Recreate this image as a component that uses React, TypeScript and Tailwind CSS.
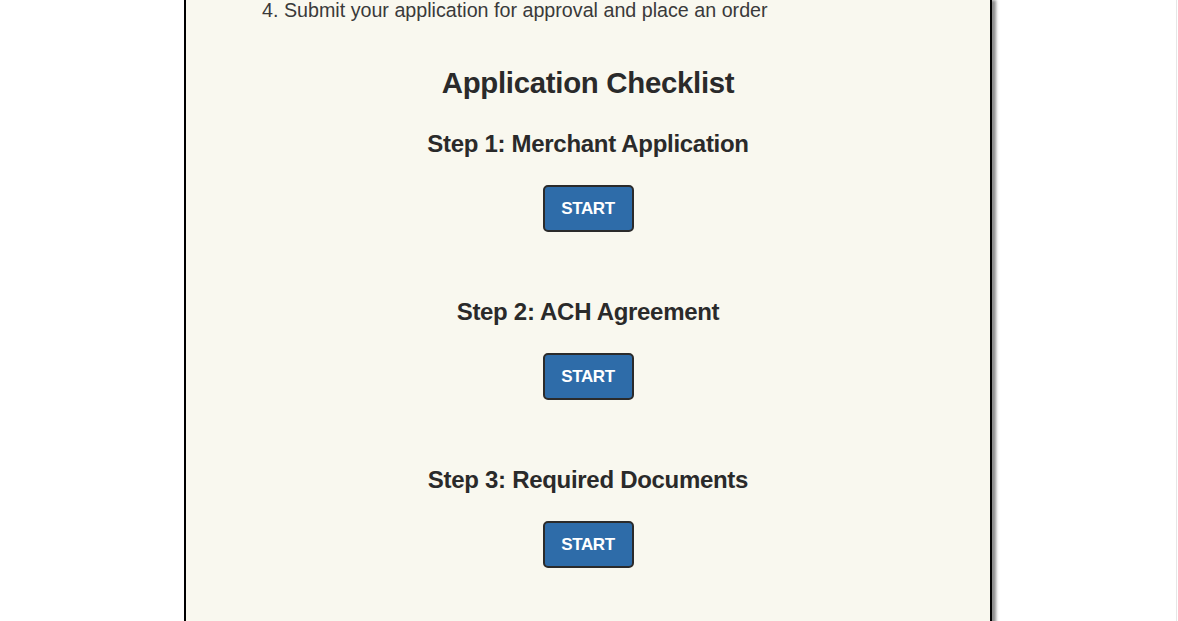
import React from "react";

function Step({ title }: { title: string }) {
  return (
    <div className="flex flex-col items-center">
      <h3 className="text-[24px] leading-[30px] font-bold text-[#2a2a2a] tracking-[-0.3px]">{title}</h3>
      <button className="mt-[26px] w-[91px] h-[47px] rounded-[5px] border-2 border-[#2b2b2b] bg-[#2e6ca9] text-white text-[17px] font-bold tracking-[-0.4px]">
        START
      </button>
    </div>
  );
}

export default function App() {
  return (
    <div className="w-[1178px] h-[621px] overflow-hidden bg-white flex" style={{ fontFamily: '"Liberation Sans", Arial, sans-serif' }}>
      <div className="ml-[184px] w-[808px] h-[700px] border-x-2 border-black bg-[#f9f8ef] shadow-[4px_0_3px_rgba(0,0,0,0.45)] flex flex-col">
        <ol className="pl-[76px] mt-[-4px] text-[19.7px] leading-[28px] text-[#3a3a3a] font-light">
          <li>4. Submit your application for approval and place an order</li>
        </ol>
        <h2 className="mt-[41px] text-center text-[29.4px] leading-[36px] font-bold text-[#2a2a2a] tracking-[-0.3px]">Application Checklist</h2>
        <div className="mt-[28px] flex flex-col gap-[65px]">
          <Step title="Step 1: Merchant Application" />
          <Step title="Step 2: ACH Agreement" />
          <Step title="Step 3: Required Documents" />
        </div>
      </div>
      <div className="ml-auto w-[2px] h-full border-l border-[#e6e6e6]" />
    </div>
  );
}
